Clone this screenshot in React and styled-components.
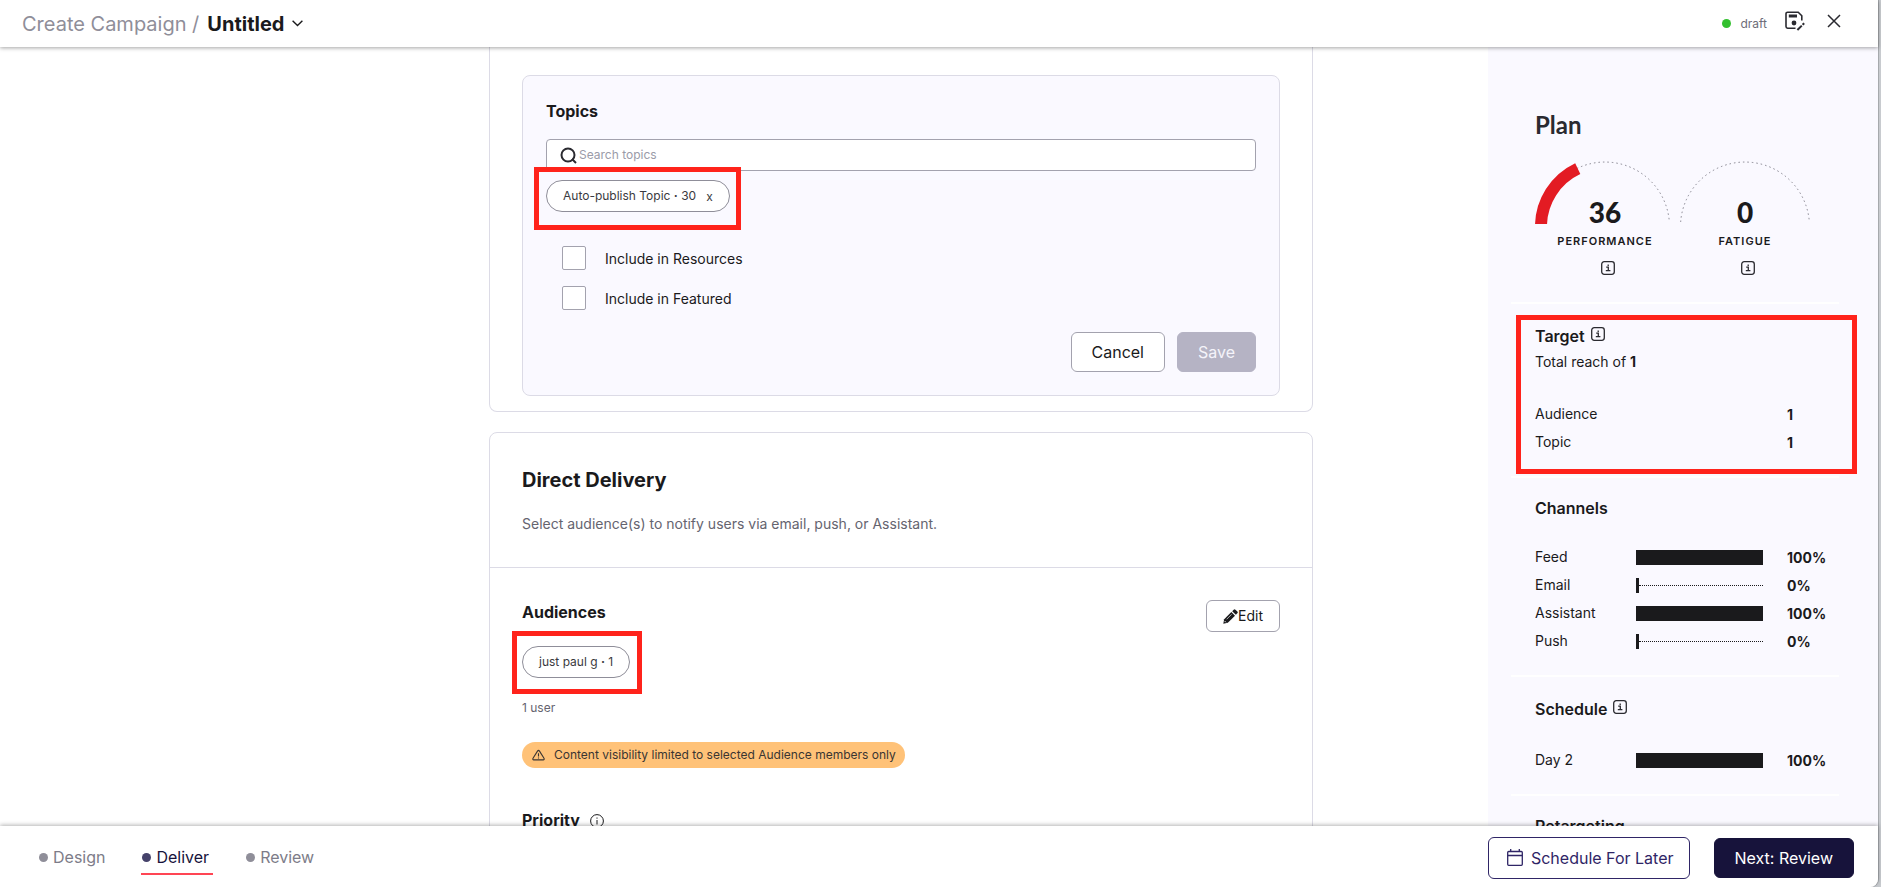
import React from "react";
import styled, { createGlobalStyle, css } from "styled-components";

const GlobalStyle = createGlobalStyle`
  * {
    box-sizing: border-box;
  }

  body {
    margin: 0;
    background: #fff;
    color: #1a1a1c;
    font-family: Inter, "Liberation Sans", sans-serif;
    font-size: 14px;
    line-height: 20px;
  }

  h1, h2, h3, p, dl, dt, dd, ol {
    margin: 0;
    padding: 0;
  }

  button, input {
    font-family: inherit;
    color: inherit;
  }

  svg {
    display: block;
    flex: none;
  }
`;

const Desktop = styled.div`
  height: 100vh;
  padding-right: 3px;
  background: #c8cbcf;
`;

const Window = styled.div`
  display: flex;
  flex-direction: column;
  height: 100%;
  background: #fff;
  border-bottom-right-radius: 8px;
  box-shadow: 1px 0 0 #a6a9ad;
`;

const Bar = css`
  display: flex;
  align-items: center;
  justify-content: space-between;
  flex: none;
  position: relative;
  z-index: 2;
  background: #fff;
`;

const TopBar = styled.header`
  ${Bar};
  height: 47px;
  padding: 0 37px 0 22px;
  box-shadow: 0 1px 4px rgba(0, 0, 0, 0.36);
`;

const Breadcrumb = styled.div`
  display: flex;
  align-items: center;
  gap: 8px;
  font-size: 20px;
  line-height: 24px;
  color: #8f8e99;
`;

const PlainButton = styled.button`
  display: flex;
  align-items: center;
  padding: 0;
  border: 0;
  background: none;
  cursor: pointer;
`;

const NameButton = styled(PlainButton)`
  gap: 8px;
  font-size: 20px;
  line-height: 24px;
  font-weight: 700;
  color: #1a1a1c;
`;

const TopActions = styled.div`
  display: flex;
  align-items: center;
  gap: 18px;
`;

const Status = styled.span`
  display: flex;
  align-items: center;
  gap: 9px;
  font-size: 12px;
  color: #6d6c78;

  &::before {
    content: "";
    width: 9px;
    height: 9px;
    border-radius: 50%;
    background: #33c02f;
  }
`;

const IconButton = styled(PlainButton)`
  padding-bottom: 6px;

  & + & {
    margin-left: 4px;
  }
`;

const Content = styled.div`
  display: flex;
  flex: 1;
  min-height: 0;
  overflow: hidden;
`;

const Main = styled.main`
  flex: 1;
  min-width: 0;
  padding: 0 175px 0 489px;
`;

const Card = styled.section`
  border: 1px solid #dcdbe6;
  border-radius: 8px;

  & + & {
    margin-top: 20px;
  }
`;

const TopicsCard = styled(Card)`
  border-top: 0;
  border-radius: 0 0 8px 8px;
  padding: 28px 32px 15px;
`;

const Panel = styled.div`
  padding: 23px;
  border: 1px solid #dcdbe6;
  border-radius: 8px;
  background: #faf9ff;
`;

const SubTitle = styled.h3`
  font-size: 16px;
  line-height: 24px;
  font-weight: 700;
`;

const SearchBox = styled.label`
  display: flex;
  align-items: center;
  gap: 2px;
  height: 32px;
  margin: 16px 0 9px;
  padding: 0 13px;
  border: 1px solid #a3a2ae;
  border-radius: 4px;
  background: #fff;

  input {
    flex: 1;
    min-width: 0;
    padding: 0;
    border: 0;
    outline: 0;
    background: none;
    font-size: 12px;
    line-height: 20px;
  }

  input::placeholder {
    color: #9a9ba8;
    opacity: 1;
  }
`;

const ChipSlot = styled.div`
  position: relative;
  width: fit-content;
`;

const Chip = styled.span`
  display: flex;
  align-items: center;
  gap: 8px;
  height: 32px;
  padding: 0 16px;
  border: 1px solid #8f8e99;
  border-radius: 16px;
  background: #fff;
  font-size: 12px;
  color: #3a3a40;
`;

const RemoveButton = styled(PlainButton)`
  padding: 2px 0 0 2px;
  font-size: 12px;
  line-height: 16px;
`;

// red frame laid over the part it calls out
const Callout = styled.span`
  position: absolute;
  inset: ${({ $inset }) => $inset};
  border: 5px solid #ff231b;
  pointer-events: none;
`;

const Options = styled.div`
  display: grid;
  gap: 16px;
  margin: 34px 0 22px;
  padding-left: 16px;
`;

const Option = styled.label`
  display: flex;
  align-items: center;
  gap: 19px;
  width: fit-content;
  height: 24px;

  input {
    appearance: none;
    width: 24px;
    height: 24px;
    margin: 0;
    border: 1px solid #a3a2ae;
    border-radius: 2px;
    background: #fff;
  }

  span {
    padding-top: 2px;
  }
`;

const PanelActions = styled.div`
  display: flex;
  justify-content: flex-end;
  gap: 12px;
`;

const buttonColors = {
  outline: css`
    border-color: #a3a2ae;
    background: #fff;
    color: #1a1a1c;
  `,
  disabled: css`
    border-color: #b5b3c4;
    background: #b5b3c4;
    color: #f4f3fa;
  `,
  schedule: css`
    border-color: #2f2566;
    background: #fff;
    color: #2f2566;
  `,
  primary: css`
    border-color: #17133b;
    background: #17133b;
    color: #fff;
  `,
};

const Button = styled.button`
  display: flex;
  align-items: center;
  justify-content: center;
  gap: 8px;
  height: 40px;
  padding: 0 20px;
  border: 1px solid;
  border-radius: 6px;
  font-size: 16px;
  line-height: 24px;
  ${({ $kind }) => buttonColors[$kind]};
`;

const EditButton = styled(Button)`
  gap: 0;
  height: 32px;
  padding: 0 16px;
  font-size: 14px;
  line-height: 20px;
`;

const CardHeader = styled.div`
  padding: 33px 32px;
  border-bottom: 1px solid #dcdbe6;
`;

const CardTitle = styled.h2`
  margin-bottom: 20px;
  font-size: 20px;
  line-height: 28px;
  font-weight: 700;
`;

const Muted = styled.p`
  font-size: ${({ $small }) => ($small ? 12 : 14)}px;
  line-height: 20px;
  color: #65646f;
`;

const CardBody = styled.div`
  padding: 32px;
`;

const AudienceHead = styled.div`
  display: flex;
  align-items: flex-start;
  justify-content: space-between;
  margin-bottom: 14px;
`;

const UserCount = styled(Muted)`
  margin: 20px 0 24px;
`;

const Warning = styled.p`
  display: flex;
  align-items: center;
  gap: 9px;
  width: fit-content;
  height: 26px;
  margin-bottom: 40px;
  padding: 0 9px 0 10px;
  border-radius: 13px;
  background: #ffc278;
  font-size: 12px;
  color: #3a3532;
`;

const PriorityHead = styled.div`
  display: flex;
  align-items: center;
  gap: 10px;

  svg {
    margin-top: 2px;
  }
`;

const Sidebar = styled.aside`
  flex: none;
  width: 390px;
  padding: 62px 39px 0 23px;
  background: #faf9ff;
`;

const PlanTitle = styled.h2`
  margin-bottom: 20px;
  padding-left: 24px;
  font-family: Lato, sans-serif;
  font-size: 24px;
  line-height: 32px;
  font-weight: 700;
  color: #2a2a30;
`;

const Gauges = styled.div`
  display: flex;
  padding: 0 0 27px 24px;
`;

const GaugeItem = styled.div`
  display: grid;
  flex: none;
  width: 140px;
  justify-items: center;

  > svg,
  > strong {
    grid-area: 1 / 1;
  }

  > strong {
    align-self: end;
    font-family: Lato, sans-serif;
    font-size: 28px;
    line-height: 24px;
    font-weight: 900;
  }
`;

const GaugeLabel = styled.span`
  margin: 9px 0 12px;
  font-size: 11px;
  line-height: 16px;
  font-weight: 600;
  letter-spacing: 1px;
`;

const GaugeInfo = styled.span`
  padding-left: 6px;
`;

const PlanSection = styled.section`
  position: relative;
  padding: 20px 0 20px 24px;
  border-top: 2px solid #fff;
`;

const PlanHeading = styled.h3`
  display: flex;
  gap: 6px;
  font-size: 16px;
  line-height: ${({ $info }) => ($info ? 24 : 20)}px;
  font-weight: 600;

  svg {
    margin-top: 3px;
  }
`;

const Reach = styled.p`
  margin: 4px 0 28px;
`;

const Stats = styled.dl`
  display: grid;
  grid-auto-rows: 28px;

  ${PlanHeading} + & {
    margin-top: 25px;
  }
`;

const Stat = styled.div`
  display: grid;
  grid-template-columns: 101px 1fr 52px;
  align-items: center;

  dd:last-child {
    grid-column: 3;
    padding-top: 2px;
    font-weight: 700;
  }
`;

const Track = styled.dd`
  display: flex;
  align-items: center;
  height: 15px;
  margin-right: 24px;

  &::before {
    content: "";
    width: ${({ $value }) => $value}%;
    min-width: 3px;
    height: 15px;
    background: #1a1a1c;
  }

  &::after {
    content: "";
    flex: 1;
    border-top: 1px dotted #1a1a1c;
  }
`;

const BottomBar = styled.footer`
  ${Bar};
  height: 61px;
  padding: 2px 24px 0 38px;
  border-bottom-right-radius: 8px;
  box-shadow: 0 -1px 4px rgba(0, 0, 0, 0.3);
`;

const Steps = styled.ol`
  display: flex;
  gap: 32px;
  list-style: none;
`;

const Step = styled.a`
  display: flex;
  align-items: center;
  gap: 5px;
  padding: 5px 4px 4px 1px;
  border-bottom: 2px solid ${({ $active }) => ($active ? "#ff4554" : "transparent")};
  color: ${({ $active }) => ($active ? "#17133b" : "#7d7c88")};
  font-size: 16px;
  line-height: 24px;
  text-decoration: none;

  &::before {
    content: "";
    width: 9px;
    height: 9px;
    border-radius: 50%;
    background: ${({ $active }) => ($active ? "#45426a" : "#8f8e99")};
  }
`;

const BottomActions = styled.div`
  display: flex;
  align-items: center;
  gap: 24px;
`;

const ScheduleButton = styled(Button)`
  height: 42px;
  padding: 0 15px 0 18px;
`;

const ChevronIcon = () => (
  <svg width="11" height="7" viewBox="0 0 11 7" fill="none" stroke="#1a1a1c" strokeWidth="1.4">
    <path d="M0.6 0.8 5.5 5.6 10.4 0.8" />
  </svg>
);

const SaveDraftIcon = () => (
  <svg width="20" height="20" viewBox="0 0 20 20" fill="none" stroke="#2a2a30" strokeWidth="1.6">
    <path d="M10.5 17.200H2.600A1.600 1.600 0 0 1 1 15.600V2.800A1.600 1.600 0 0 1 2.600 1.200H13.200L16.800 4.800V9.500" />
    <path d="M3.800 5H12" strokeWidth="3" />
    <circle cx="9" cy="12" r="2.400" fill="#2a2a30" stroke="none" />
    <path d="M12.400 19 16.800 14.600M17.600 13.800 19.200 12.200" strokeWidth="2" />
  </svg>
);

const CloseIcon = () => (
  <svg width="14" height="14" viewBox="0 0 14 14" stroke="#2a2a30" strokeWidth="1.500">
    <path d="M1 1 13 13M13 1 1 13" />
  </svg>
);

const SearchIcon = () => (
  <svg width="17" height="17" viewBox="0 0 17 17" fill="none" stroke="#2a2a30" strokeWidth="2">
    <circle cx="8" cy="8" r="6.500" />
    <path d="M12 12 16 16" />
  </svg>
);

const PencilIcon = () => (
  <svg width="15" height="15" viewBox="0 0 14 14" fill="#1a1a1c">
    <path d="M0.300 13.700 1.100 9.500 7.800 2.800 11.200 6.200 4.500 12.900Z" />
    <path d="M8.600 2 10 0.600Q10.800 -0.100 11.600 0.600L13.400 2.400Q14.100 3.200 13.400 4L12 5.400Z" />
    <path d="M3.400 9.600 8 5" stroke="#fff" strokeWidth="0.600" />
    <path d="M1.600 11.300 2.700 12.400" stroke="#fff" strokeWidth="0.900" />
  </svg>
);

const WarningIcon = () => (
  <svg width="13" height="12" viewBox="0 0 13 12" fill="none" stroke="#3a3532" strokeWidth="1.100" strokeLinejoin="round">
    <path d="M5.500 2.100Q6.500 0.600 7.500 2.100L12 9.200Q12.600 10.800 11.200 10.900H1.800Q0.400 10.800 1 9.200Z" />
    <path d="M6.500 4.300V7.500M6.500 8.500V9.500" />
  </svg>
);

const InfoCircleIcon = () => (
  <svg width="14" height="14" viewBox="0 0 14 14" fill="none" stroke="#1a1a1c">
    <circle cx="7" cy="7" r="6.400" />
    <path d="M7 6V10.500M7 3.500V4.700" />
  </svg>
);

const InfoSquareIcon = () => (
  <svg width="14" height="14" viewBox="0 0 14 14" fill="none" stroke="#2a2a30" strokeWidth="1.300">
    <rect x="0.700" y="0.700" width="12.600" height="12.600" rx="2.500" />
    <path d="M5.200 6.200H7.300V9.600M4.800 9.700H9.400M7.200 3.500V4.900" />
  </svg>
);

const CalendarIcon = () => (
  <svg width="16" height="17" viewBox="0 0 16 17" fill="none" stroke="#2f2566" strokeWidth="1.300">
    <rect x="0.700" y="2.500" width="14.600" height="13.800" rx="1" />
    <path d="M0.700 6.500H15.300M3.700 0V2.500M12.300 0V2.500" />
  </svg>
);

const Gauge = ({ value, label }) => {
  const angle = (Math.PI * value) / 100;
  const x = 70 - 64 * Math.cos(angle);
  const y = 65.5 - 64 * Math.sin(angle);

  return (
    <GaugeItem>
      <svg width="140" height="63" viewBox="0 0 140 63" fill="none">
        <path d="M5.660 61A64.500 64.500 0 0 1 134.340 61" stroke="#85848f" strokeDasharray="1.500 3" />
        {value > 0 && (
          <path d={`M6 65.500A64 64 0 0 1 ${x} ${y}`} stroke="#e31b23" strokeWidth="12" />
        )}
      </svg>
      <strong>{value}</strong>
      <GaugeLabel>{label}</GaugeLabel>
      <GaugeInfo>
        <InfoSquareIcon />
      </GaugeInfo>
    </GaugeItem>
  );
};

const BarStat = ({ name, value }) => (
  <Stat>
    <dt>{name}</dt>
    <Track $value={value} />
    <dd>{value}%</dd>
  </Stat>
);

const channels = [
  { name: "Feed", value: 100 },
  { name: "Email", value: 0 },
  { name: "Assistant", value: 100 },
  { name: "Push", value: 0 },
];

const App = () => {
  return (
    <Desktop>
      <GlobalStyle />
      <Window>
        <TopBar>
          <Breadcrumb>
            <span>Create Campaign /</span>
            <NameButton type="button">
              Untitled
              <ChevronIcon />
            </NameButton>
          </Breadcrumb>
          <TopActions>
            <Status>draft</Status>
            <IconButton type="button" aria-label="Save draft">
              <SaveDraftIcon />
            </IconButton>
            <IconButton type="button" aria-label="Close">
              <CloseIcon />
            </IconButton>
          </TopActions>
        </TopBar>

        <Content>
          <Main>
            <TopicsCard>
              <Panel>
                <SubTitle>Topics</SubTitle>
                <SearchBox>
                  <SearchIcon />
                  <input type="text" placeholder="Search topics" aria-label="Search topics" />
                </SearchBox>
                <ChipSlot>
                  <Chip>
                    <span>Auto-publish Topic <b>·</b> 30</span>
                    <RemoveButton type="button">x</RemoveButton>
                  </Chip>
                  <Callout $inset="-13px -11px -18px -12px" />
                </ChipSlot>
                <Options>
                  <Option>
                    <input type="checkbox" />
                    <span>Include in Resources</span>
                  </Option>
                  <Option>
                    <input type="checkbox" />
                    <span>Include in Featured</span>
                  </Option>
                </Options>
                <PanelActions>
                  <Button type="button" $kind="outline">Cancel</Button>
                  <Button type="button" $kind="disabled" disabled>Save</Button>
                </PanelActions>
              </Panel>
            </TopicsCard>

            <Card>
              <CardHeader>
                <CardTitle>Direct Delivery</CardTitle>
                <Muted>Select audience(s) to notify users via email, push, or Assistant.</Muted>
              </CardHeader>
              <CardBody>
                <AudienceHead>
                  <SubTitle>Audiences</SubTitle>
                  <EditButton type="button" $kind="outline">
                    <PencilIcon />
                    Edit
                  </EditButton>
                </AudienceHead>
                <ChipSlot>
                  <Chip>
                    <span>just paul g <b>·</b> 1</span>
                  </Chip>
                  <Callout $inset="-15px -12px -16px -10px" />
                </ChipSlot>
                <UserCount $small>1 user</UserCount>
                <Warning>
                  <WarningIcon />
                  Content visibility limited to selected Audience members only
                </Warning>
                <PriorityHead>
                  <SubTitle>Priority</SubTitle>
                  <InfoCircleIcon />
                </PriorityHead>
              </CardBody>
            </Card>
          </Main>

          <Sidebar>
            <PlanTitle>Plan</PlanTitle>
            <Gauges>
              <Gauge value={36} label="PERFORMANCE" />
              <Gauge value={0} label="FATIGUE" />
            </Gauges>

            <PlanSection>
              <PlanHeading $info>
                Target
                <InfoSquareIcon />
              </PlanHeading>
              <Reach>
                Total reach of <strong>1</strong>
              </Reach>
              <Stats>
                <Stat>
                  <dt>Audience</dt>
                  <dd>1</dd>
                </Stat>
                <Stat>
                  <dt>Topic</dt>
                  <dd>1</dd>
                </Stat>
              </Stats>
              <Callout $inset="11px -18px 2px 5px" />
            </PlanSection>

            <PlanSection>
              <PlanHeading>Channels</PlanHeading>
              <Stats>
                {channels.map((channel) => (
                  <BarStat key={channel.name} {...channel} />
                ))}
              </Stats>
            </PlanSection>

            <PlanSection>
              <PlanHeading $info>
                Schedule
                <InfoSquareIcon />
              </PlanHeading>
              <Stats>
                <BarStat name="Day 2" value={100} />
              </Stats>
            </PlanSection>

            <PlanSection>
              <PlanHeading>Retargeting</PlanHeading>
            </PlanSection>
          </Sidebar>
        </Content>

        <BottomBar>
          <Steps>
            <li><Step href="#design">Design</Step></li>
            <li><Step href="#deliver" $active>Deliver</Step></li>
            <li><Step href="#review">Review</Step></li>
          </Steps>
          <BottomActions>
            <ScheduleButton type="button" $kind="schedule">
              <CalendarIcon />
              Schedule For Later
            </ScheduleButton>
            <Button type="button" $kind="primary">Next: Review</Button>
          </BottomActions>
        </BottomBar>
      </Window>
    </Desktop>
  );
};

export default App;
